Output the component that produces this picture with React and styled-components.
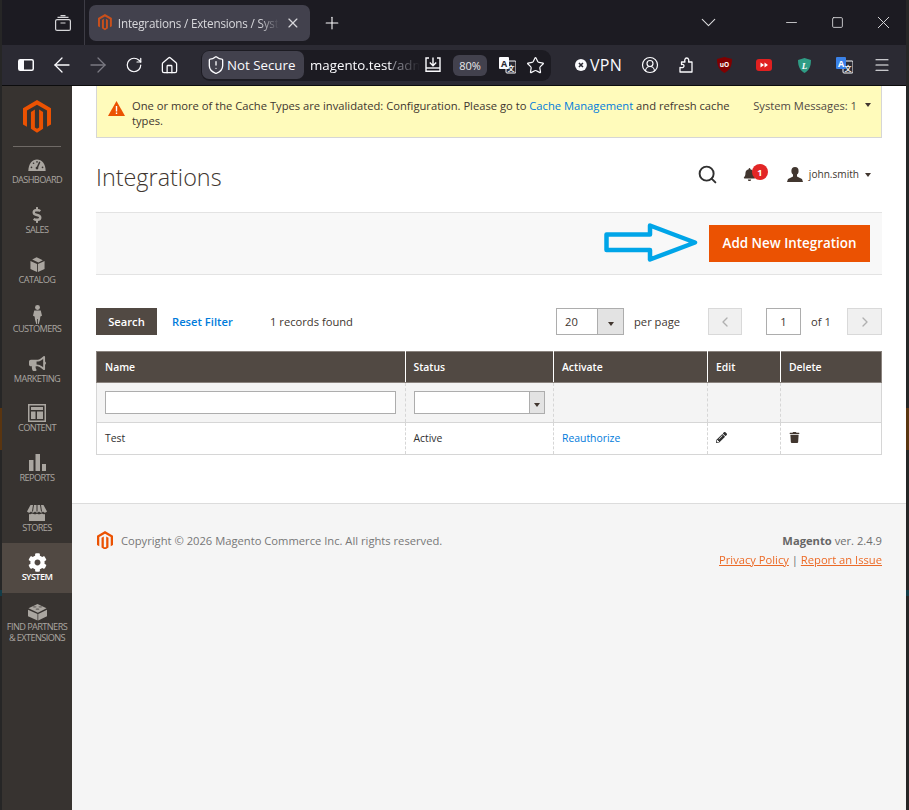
import React from "react";
import styled, { createGlobalStyle } from "styled-components";
import {
  ArrowLeft,
  ArrowRight,
  RotateCw,
  Home,
  ShieldAlert,
  Star,
  Menu,
  X,
  Plus,
  ChevronDown,
  ChevronLeft,
  ChevronRight,
  Minus,
  Square,
  CircleUserRound,
  Search,
} from "lucide-react";
import { FaBullhorn, FaCog, FaDollarSign, FaPencilAlt, FaTrash, FaBell } from "react-icons/fa";

const GlobalStyle = createGlobalStyle`
  html, body {
    margin: 0;
    padding: 0;
    width: 909px;
    height: 810px;
    overflow: hidden;
    background: #1c1b22;
  }
  * { box-sizing: border-box; }
`;

const Win = styled.div`
  width: 909px;
  height: 810px;
  padding: 0 3px 0 2px;
  display: flex;
  flex-direction: column;
  font-family: "Open Sans", sans-serif;
  overflow: hidden;
  background: linear-gradient(
    to bottom,
    #262626 0 408px,
    #5a3510 408px 450px,
    #262626 450px 590px,
    #123c48 590px 596px,
    #262626 596px
  );
`;

const TabStrip = styled.div`
  height: 45px;
  background: #1c1b22;
  display: flex;
  align-items: center;
  color: #fbfbfe;
  flex: none;
`;

const TabGroupBtn = styled.div`
  width: 83px;
  height: 45px;
  border-right: 1px solid #3d3c45;
  display: flex;
  align-items: center;
  justify-content: flex-end;
  padding-right: 13px;
  flex: none;
`;

const Tab = styled.div`
  margin-left: 4px;
  width: 221px;
  height: 36px;
  background: #42414d;
  border-radius: 7px;
  display: flex;
  align-items: center;
  padding: 0 9px;
  gap: 6px;
  flex: none;
`;

const TabTitle = styled.span`
  font-size: 11.7px;
  letter-spacing: -0.2px;
  width: 163px;
  white-space: nowrap;
  overflow: hidden;
  color: #d8d8dc;
  -webkit-mask-image: linear-gradient(to right, #000 88%, transparent 100%);
  mask-image: linear-gradient(to right, #000 88%, transparent 100%);
`;

const NewTab = styled.div`
  margin-left: 12px;
  width: 20px;
  display: flex;
  flex: none;
`;

const WinControls = styled.div`
  margin-left: auto;
  display: flex;
  align-items: center;
  color: #dcdcde;
  height: 45px;
`;

const WinBtn = styled.div`
  width: 46px;
  display: flex;
  justify-content: center;
  margin-left: ${(p) => p.$ml || 0}px;
`;

const NavBar = styled.div`
  height: 41px;
  background: #2b2a33;
  border-bottom: 1px solid #0c0c0d;
  display: flex;
  align-items: center;
  color: #fbfbfe;
  flex: none;
  padding-left: 6px;
`;

const NavIcon = styled.div`
  width: ${(p) => p.$w || 36}px;
  margin-left: ${(p) => p.$ml || 0}px;
  flex: none;
  display: flex;
  align-items: center;
  justify-content: center;
  color: ${(p) => (p.$dim ? "#7b7a83" : "#fbfbfe")};
`;

const UrlBar = styled.div`
  width: 350px;
  height: 31px;
  margin-left: 14px;
  background: #1c1b22;
  border-radius: 9px;
  display: flex;
  align-items: center;
  padding-left: 1px;
  flex: none;
`;

const SecurePill = styled.div`
  width: 102px;
  height: 28px;
  background: #42414d;
  border-radius: 7px;
  display: flex;
  align-items: center;
  padding-left: 4px;
  gap: 1px;
  font-size: 13.3px;
  color: #fbfbfe;
  flex: none;
`;

const UrlText = styled.div`
  margin-left: 6px;
  width: 110px;
  font-size: 13.3px;
  white-space: nowrap;
  overflow: hidden;
  color: #fbfbfe;
  -webkit-mask-image: linear-gradient(to right, #000 80%, transparent 100%);
  mask-image: linear-gradient(to right, #000 80%, transparent 100%);
  span { color: #8f8f98; }
`;

const ZoomPill = styled.div`
  margin-left: 12px;
  width: 34px;
  height: 21px;
  background: #42414d;
  border-radius: 6px;
  font-size: 11px;
  display: flex;
  align-items: center;
  justify-content: center;
  color: #e8e8ea;
  flex: none;
`;

const VpnBadge = styled.div`
  margin-left: 24px;
  width: 47px;
  display: flex;
  align-items: center;
  gap: 3px;
  font-size: 16px;
  letter-spacing: 0.3px;
  font-weight: 500;
  flex: none;
`;

const Page = styled.div`
  flex: 1;
  display: flex;
  min-height: 0;
`;

const Sidebar = styled.nav`
  width: 70px;
  background: #373330;
  flex: none;
  display: flex;
  flex-direction: column;
`;

const LogoBox = styled.div`
  height: 61px;
  margin: 0 11px;
  border-bottom: 1px solid #6f6a66;
  display: flex;
  justify-content: center;
  padding-top: 14px;
  flex: none;
`;

const MenuList = styled.div`
  display: flex;
  flex-direction: column;
  margin-top: -0.6px;
`;

const MenuItem = styled.div`
  height: 49.6px;
  background: ${(p) => (p.$active ? "#514943" : "transparent")};
  color: ${(p) => (p.$active ? "#ffffff" : "#aaa6a0")};
  display: flex;
  flex-direction: column;
  align-items: center;
  padding-top: 8px;
`;

const MenuIconSlot = styled.div`
  height: 22px;
  display: flex;
  align-items: center;
  justify-content: center;
  flex: none;
`;

const MenuLabel = styled.div`
  font-size: 9.2px;
  line-height: 11px;
  letter-spacing: -0.6px;
  text-align: center;
  margin-top: -2px;
  white-space: pre-line;
  font-weight: ${(p) => (p.$active ? 600 : 400)};
`;

const Main = styled.main`
  flex: 1;
  display: flex;
  flex-direction: column;
  background: #fff;
  min-width: 0;
`;

const Content = styled.div`
  padding: 0 24px;
  height: 417px;
  flex: none;
  display: flex;
  flex-direction: column;
`;

const Notice = styled.div`
  height: 52px;
  flex: none;
  background: #fffbbb;
  border: 1px solid #d6d6d6;
  border-top: 0;
  display: flex;
  padding: 12px 10px 0 11px;
  font-size: 11.2px;
  line-height: 15px;
  color: #41362f;
`;

const WarnIcon = styled.svg`
  flex: none;
  margin-top: 3px;
`;

const NoticeText = styled.div`
  margin-left: 7px;
  width: 600px;
  a { color: #007bdb; text-decoration: none; }
`;

const SysMessages = styled.div`
  margin-left: auto;
  display: flex;
  gap: 8px;
  white-space: nowrap;
  color: #514943;
`;

const Caret = styled.span`
  display: inline-block;
  width: 0;
  height: 0;
  border-left: 3px solid transparent;
  border-right: 3px solid transparent;
  border-top: 4px solid #41362f;
  margin-top: ${(p) => p.$top || 5}px;
`;

const PageHeader = styled.div`
  height: 74px;
  flex: none;
  display: flex;
  align-items: center;
  justify-content: space-between;
  padding-right: 11px;
`;

const Title = styled.h1`
  margin: 3px 0 0;
  font-size: 23.4px;
  font-weight: 300;
  color: #41362f;
`;

const HeaderTools = styled.div`
  display: flex;
  align-items: center;
  color: #303030;
  padding-bottom: 2px;
`;

const SearchIcon = styled(Search)`
  margin-right: -3px;
`;

const Bell = styled.div`
  position: relative;
  margin-left: 28px;
  width: 44px;
  height: 16px;
  display: flex;
  align-items: center;
  color: #41362f;
`;

const Badge = styled.span`
  position: absolute;
  left: 9px;
  top: -2px;
  width: 16px;
  height: 16px;
  border-radius: 50%;
  background: #e22626;
  color: #fff;
  font-size: 9px;
  font-weight: 700;
  display: flex;
  align-items: center;
  justify-content: center;
`;

const UserName = styled.span`
  font-size: 10.1px;
  margin: 0 6px;
  color: #41362f;
`;

const ActionBar = styled.div`
  height: 63px;
  flex: none;
  position: relative;
  background: #f8f8f8;
  border-top: 1px solid #e3e3e3;
  border-bottom: 1px solid #e3e3e3;
  display: flex;
  align-items: center;
  justify-content: flex-end;
  padding-right: 12px;
`;

const PrimaryBtn = styled.div`
  width: 161px;
  height: 37px;
  padding-bottom: 2px;
  background: #eb5202;
  color: #fff;
  font-size: 13.4px;
  font-weight: 600;
  display: flex;
  align-items: center;
  justify-content: center;
`;

const Arrow = styled.svg`
  position: absolute;
  left: 508px;
  top: 9px;
`;

const GridBar = styled.div`
  margin-top: 33px;
  height: 27px;
  flex: none;
  display: flex;
  align-items: center;
  font-size: 11.2px;
  color: #41362f;
`;

const SearchBtn = styled.div`
  width: 61px;
  height: 27px;
  background: #514943;
  color: #fff;
  font-weight: 600;
  display: flex;
  align-items: center;
  justify-content: center;
`;

const ResetLink = styled.a`
  margin-left: 15px;
  font-weight: 600;
  color: #007bdb;
  width: 98px;
`;

const Pager = styled.div`
  margin-left: auto;
  display: flex;
  align-items: center;
`;

const PerPage = styled.div`
  width: 68px;
  height: 27px;
  border: 1px solid #adadad;
  display: flex;
  align-items: stretch;
`;

const PerValue = styled.div`
  flex: 1;
  padding-left: 8px;
  display: flex;
  align-items: center;
  font-size: 11.2px;
`;

const PerArrow = styled.div`
  width: 26px;
  background: #e3e3e3;
  border-left: 1px solid #adadad;
  display: flex;
  align-items: center;
  justify-content: center;
`;

const PageBtn = styled.div`
  width: ${(p) => p.$w}px;
  height: 27px;
  background: #f0f0f0;
  border: 1px solid #d9d9d9;
  color: #b0b0b0;
  display: flex;
  align-items: center;
  justify-content: center;
`;

const PageInput = styled.div`
  margin-left: 24px;
  width: 35px;
  height: 27px;
  border: 1px solid #adadad;
  display: flex;
  align-items: center;
  justify-content: center;
`;

const PagerText = styled.span`
  margin-left: 10px;
  width: ${(p) => p.$w}px;
`;

const GridTable = styled.table`
  margin-top: 16px;
  width: 785px;
  height: 103px;
  flex: none;
  border-collapse: collapse;
  table-layout: fixed;
  font-size: 10.4px;
  color: #303030;
`;

const Th = styled.th`
  height: 31px;
  background: #514943;
  color: #fff;
  font-size: 10.4px;
  font-weight: 600;
  text-align: left;
  padding: 0 8px;
  border: 1px solid #8a837e;
  border-left: 1px solid #fff;
  border-right: 1px solid #fff;
  &:first-child { border-left: 1px solid #8a837e; }
  &:last-child { border-right: 1px solid #8a837e; }
`;

const FilterCell = styled.td`
  height: 40px;
  background: #f4f4f4;
  padding: 0 8px;
  border-bottom: 1px solid #d6d6d6;
  border-left: 1px dashed #d6d6d6;
  &:first-child { border-left: 1px solid #d6d6d6; padding-right: 9px; }
  &:last-child { border-right: 1px solid #d6d6d6; }
`;

const DataCell = styled.td`
  height: 32px;
  padding: 0 8px 2px;
  background: #fff;
  border-bottom: 1px solid #d6d6d6;
  border-left: 1px dashed #d6d6d6;
  &:first-child { border-left: 1px solid #d6d6d6; }
  &:last-child { border-right: 1px solid #d6d6d6; }
  a { color: #007bdb; }
  svg { display: block; }
`;

const TextBox = styled.div`
  height: 23px;
  background: #fff;
  border: 1px solid #adadad;
`;

const SelectBox = styled.div`
  height: 23px;
  background: #fff;
  border: 1px solid #adadad;
  display: flex;
  justify-content: flex-end;
`;

const SelectArrow = styled.div`
  width: 15px;
  background: #e3e3e3;
  border-left: 1px solid #adadad;
  display: flex;
  align-items: center;
  justify-content: center;
`;

const Footer = styled.footer`
  flex: 1;
  background: #f5f5f5;
  border-top: 1px solid #dcdcdc;
  padding: 27px 24px 0 25px;
  display: flex;
  justify-content: space-between;
  font-size: 11.2px;
  color: #6f6f6f;
`;

const Copyright = styled.div`
  display: flex;
  align-items: center;
  gap: 8px;
  height: 18px;
  color: #777;
`;

const FooterRight = styled.div`
  text-align: right;
  line-height: 19px;
  a { color: #eb5202; text-decoration: underline; opacity: 0.85; }
  b { font-weight: 700; color: #666; }
`;

const MagentoLogo = ({ size = 28, color = "#eb5202" }) => (
  <svg width={size} height={(size * 28) / 24} viewBox="0 0 24 28" fill={color}>
    <path d="M12 0 L24 7 V21 L20.6 23 V9 L12 4 L3.4 9 V23 L0 21 V7 Z" />
    <path d="M13.8 8.2 V23.6 L12 24.7 L10.2 23.6 V8.2 L6.8 10.2 V24.7 L12 28 L17.2 24.7 V10.2 Z" />
  </svg>
);

const IconDashboard = () => (
  <svg width="18" height="12" viewBox="0 0 26 17" fill="currentColor">
    <path d="M0.5 17 C0.5 7 6 0.5 13 0.5 C20 0.5 25.5 7 25.5 17 Z" />
    <path d="M17 4 L13 13" stroke="#373330" strokeWidth="2" />
    <circle cx="13" cy="13" r="2" fill="#373330" />
    <circle cx="5" cy="12" r="1.2" fill="#373330" />
    <circle cx="8" cy="6" r="1.2" fill="#373330" />
    <circle cx="13" cy="4" r="1.2" fill="#373330" />
    <circle cx="21" cy="12" r="1.2" fill="#373330" />
  </svg>
);

const IconBox = () => (
  <svg width="15" height="15" viewBox="0 0 16 17" fill="currentColor">
    <path d="M0 4.5 L7.5 8 V17 L0 13.5 Z" />
    <path d="M8.5 8 L16 4.5 V13.5 L8.5 17 Z" />
    <path d="M2 2.8 L7 0.3 L14 3.6 L9 6.2 Z" />
  </svg>
);

const IconCustomer = () => (
  <svg width="9" height="23" viewBox="0 0 11 23" fill="currentColor">
    <circle cx="5.5" cy="3" r="3" />
    <path d="M1.5 6.5 H9.5 L11 13 L9 14 L8.5 18 L7 23 H6 V17 H5 V23 H4 L2.5 18 L2 14 L0 13 Z" />
  </svg>
);

const IconContent = () => (
  <svg width="18" height="18" viewBox="0 0 18 18" fill="currentColor">
    <path d="M0 0 H18 V18 H0 Z M1.5 1.5 V16.5 H16.5 V1.5 Z" fillRule="evenodd" />
    <rect x="3" y="3" width="12" height="3" />
    <rect x="3" y="7.5" width="4.5" height="7.5" />
    <rect x="9" y="7.5" width="6" height="7.5" />
  </svg>
);

const IconReports = () => (
  <svg width="17" height="17" viewBox="0 0 17 17" fill="currentColor">
    <rect x="0" y="6" width="4.5" height="11" />
    <rect x="6.5" y="0" width="4.5" height="17" />
    <rect x="13" y="10" width="4" height="7" />
  </svg>
);

const IconStores = () => (
  <svg width="20" height="16" viewBox="0 0 20 16" fill="currentColor">
    <path d="M3.5 0 H16.5 L20 6.5 C19 8 16.8 8 16 6.6 C15 8 13 8 12 6.6 C11 8 9 8 8 6.6 C7 8 5 8 4 6.6 C3.2 8 1 8 0 6.5 Z" />
    <path d="M2 9 C3 9.4 4.2 9.2 5 8.6 C6.8 9.6 8.2 9.6 10 8.7 C11.8 9.6 13.2 9.6 15 8.6 C15.8 9.2 17 9.4 18 9 V16 H2 Z" />
    <path d="M6.5 0 L5.5 6.5 M10 0 V6.5 M13.5 0 L14.5 6.5" stroke="#373330" strokeWidth="1" />
  </svg>
);

const IconLego = () => (
  <svg width="19" height="18" viewBox="0 0 20 18" fill="currentColor">
    <path d="M0 6.5 L10 11 V18 L0 13.5 Z" />
    <path d="M10.8 11 L20 6.5 V13.5 L10.8 18 Z" />
    <path d="M10 0.5 L19.5 5 L10.4 9.8 L0.5 5 Z" />
    <ellipse cx="7" cy="3.6" rx="2" ry="1" fill="#373330" opacity="0.45" />
    <ellipse cx="13" cy="3.6" rx="2" ry="1" fill="#373330" opacity="0.45" />
    <ellipse cx="10" cy="6" rx="2" ry="1" fill="#373330" opacity="0.45" />
  </svg>
);

const IconSidebarPanel = () => (
  <svg width="16" height="12" viewBox="0 0 16 12">
    <rect x="0.75" y="0.75" width="14.5" height="10.5" rx="1.5" fill="none" stroke="#fbfbfe" strokeWidth="1.5" />
    <rect x="1" y="1" width="5" height="10" fill="#fbfbfe" />
  </svg>
);

const IconTabGroup = () => (
  <svg width="16" height="16" viewBox="0 0 16 16" fill="none" stroke="#d5d5d8" strokeWidth="1.2">
    <rect x="0.6" y="4.6" width="14.8" height="10.8" rx="1.5" />
    <path d="M2.5 2.4 H13.5 M5.5 0.6 H10.5 M5.5 8 H10.5" />
  </svg>
);

const IconDownload = () => (
  <svg width="16" height="16" viewBox="0 0 16 16" fill="none" stroke="#fbfbfe" strokeWidth="1.4">
    <path d="M4 1 H1 V14.3 H15 V1 H12" />
    <path d="M8 0.5 V8.5 M4.8 5.6 L8 8.8 L11.2 5.6" />
    <path d="M1 11 H15" />
  </svg>
);

const IconTranslate = ({ back = "#fbfbfe", fg = "#2b2a33" }) => (
  <svg width="17" height="17" viewBox="0 0 17 17">
    <rect x="7" y="4" width="10" height="12" rx="1" fill="#2b2a33" stroke="#fbfbfe" strokeWidth="1" />
    <rect x="0" y="0" width="10" height="12" rx="1" fill={back} />
    <text x="5" y="9.5" fontSize="9" fontWeight="700" textAnchor="middle" fontFamily="Open Sans, sans-serif" fill={fg}>A</text>
    <text x="12" y="13.5" fontSize="7" fontWeight="700" textAnchor="middle" fontFamily="Noto Sans CJK SC, sans-serif" fill="#fbfbfe">文</text>
  </svg>
);

const IconPuzzle = () => (
  <svg width="14" height="16" viewBox="0 0 14 16" fill="none" stroke="#fbfbfe" strokeWidth="1.3" strokeLinejoin="round">
    <path d="M5 15 H13 V5 H9.5 C10 4 10 1 7.7 1 C5.5 1 5.5 4 6 5 H2.5 V7.5 C4.5 7 5 8 5 9 C5 10 4.2 11 1 10.4 V15 Z" />
  </svg>
);

const IconUblock = () => (
  <svg width="15" height="16" viewBox="0 0 15 16">
    <path d="M7.5 0 L15 2 C15 9 13 13 7.5 16 C2 13 0 9 0 2 Z" fill="#800000" />
    <text x="7.5" y="9.5" fontSize="6.5" fontWeight="700" textAnchor="middle" fontFamily="Open Sans, sans-serif" fill="#fff">uO</text>
  </svg>
);

const IconRedPlay = () => (
  <svg width="16" height="12" viewBox="0 0 16 12">
    <rect width="16" height="12" rx="3" fill="#e02020" />
    <path d="M4.5 3.5 L8 6 L4.5 8.5 Z M8.5 3.5 L12 6 L8.5 8.5 Z" fill="#fff" />
  </svg>
);

const IconGreenShield = () => (
  <svg width="13" height="15" viewBox="0 0 13 15">
    <path d="M6.5 0 L13 2 C13 8.5 11 12.5 6.5 15 C2 12.5 0 8.5 0 2 Z" fill="#2f9c85" />
    <text x="6.5" y="10.5" fontSize="9" fontStyle="italic" fontWeight="700" textAnchor="middle" fontFamily="Liberation Serif, serif" fill="#fff">L</text>
  </svg>
);

const VpnDot = () => (
  <svg width="12" height="12" viewBox="0 0 12 12">
    <circle cx="6" cy="6" r="6" fill="#fbfbfe" />
    <path d="M4 4 L8 8 M8 4 L4 8" stroke="#2b2a33" strokeWidth="1.6" />
  </svg>
);

const NoticeWarning = () => (
  <WarnIcon width="17" height="15" viewBox="0 0 17 15">
    <path d="M8.5 0 L17 15 H0 Z" fill="#eb5202" />
    <rect x="7.8" y="5" width="1.4" height="5.5" fill="#fff" />
    <rect x="7.8" y="11.5" width="1.4" height="1.5" fill="#fff" />
  </WarnIcon>
);

const IconBust = () => (
  <svg width="16" height="15" viewBox="0 0 16 15" fill="#41362f">
    <ellipse cx="8" cy="4" rx="3.6" ry="4" />
    <path d="M6 7 H10 V9.5 L15 12 L16 15 H0 L1 12 L6 9.5 Z" />
  </svg>
);

const MENU = [
  { label: "DASHBOARD", icon: <IconDashboard /> },
  { label: "SALES", icon: <FaDollarSign size={16} /> },
  { label: "CATALOG", icon: <IconBox /> },
  { label: "CUSTOMERS", icon: <IconCustomer /> },
  { label: "MARKETING", icon: <FaBullhorn size={17} /> },
  { label: "CONTENT", icon: <IconContent /> },
  { label: "REPORTS", icon: <IconReports /> },
  { label: "STORES", icon: <IconStores /> },
  { label: "SYSTEM", icon: <FaCog size={19} />, active: true },
  { label: "FIND PARTNERS\n& EXTENSIONS", icon: <IconLego /> },
];

const COLUMNS = [
  { name: "Name", width: 308.5 },
  { name: "Status", width: 148.5 },
  { name: "Activate", width: 154 },
  { name: "Edit", width: 73 },
  { name: "Delete", width: 101 },
];

export default function App() {
  return (
    <Win>
      <GlobalStyle />
      <TabStrip>
        <TabGroupBtn>
          <IconTabGroup />
        </TabGroupBtn>
        <Tab>
          <MagentoLogo size={14} color="#c9501c" />
          <TabTitle>Integrations / Extensions / Syst</TabTitle>
          <X size={16} color="#d8d8dc" strokeWidth={1.8} />
        </Tab>
        <NewTab>
          <Plus size={20} strokeWidth={1.3} />
        </NewTab>
        <WinControls>
          <WinBtn>
            <ChevronDown size={25} strokeWidth={1} />
          </WinBtn>
          <WinBtn $ml={37}>
            <Minus size={17} strokeWidth={1.2} />
          </WinBtn>
          <WinBtn>
            <Square size={13} strokeWidth={1.6} />
          </WinBtn>
          <WinBtn>
            <X size={21} strokeWidth={1.1} />
          </WinBtn>
        </WinControls>
      </TabStrip>
      <NavBar>
        <NavIcon>
          <IconSidebarPanel />
        </NavIcon>
        <NavIcon>
          <ArrowLeft size={24} strokeWidth={1.3} />
        </NavIcon>
        <NavIcon $dim>
          <ArrowRight size={24} strokeWidth={1.3} />
        </NavIcon>
        <NavIcon>
          <RotateCw size={18} strokeWidth={1.6} />
        </NavIcon>
        <NavIcon $w={35}>
          <Home size={19} strokeWidth={1.6} />
        </NavIcon>
        <UrlBar>
          <SecurePill>
            <ShieldAlert size={20} strokeWidth={1.6} />
            Not Secure
          </SecurePill>
          <UrlText>
            magento.test<span>/adm</span>
          </UrlText>
          <NavIcon $w={16} $ml={5}>
            <IconDownload />
          </NavIcon>
          <ZoomPill>80%</ZoomPill>
          <NavIcon $w={17} $ml={12}>
            <IconTranslate />
          </NavIcon>
          <NavIcon $w={20} $ml={9}>
            <Star size={19} strokeWidth={1.5} />
          </NavIcon>
        </UrlBar>
        <VpnBadge>
          <VpnDot />
          VPN
        </VpnBadge>
        <NavIcon $w={20} $ml={18}>
          <CircleUserRound size={18} strokeWidth={1.6} />
        </NavIcon>
        <NavIcon $w={20} $ml={16}>
          <IconPuzzle />
        </NavIcon>
        <NavIcon $w={20} $ml={18}>
          <IconUblock />
        </NavIcon>
        <NavIcon $w={20} $ml={20}>
          <IconRedPlay />
        </NavIcon>
        <NavIcon $w={20} $ml={20}>
          <IconGreenShield />
        </NavIcon>
        <NavIcon $w={20} $ml={20}>
          <IconTranslate back="#3b82e8" fg="#fff" />
        </NavIcon>
        <NavIcon $w={20} $ml={18}>
          <Menu size={18} strokeWidth={1.6} />
        </NavIcon>
      </NavBar>
      <Page>
        <Sidebar>
          <LogoBox>
            <MagentoLogo size={28} />
          </LogoBox>
          <MenuList>
            {MENU.map((item) => (
              <MenuItem key={item.label} $active={item.active}>
                <MenuIconSlot>{item.icon}</MenuIconSlot>
                <MenuLabel $active={item.active}>{item.label}</MenuLabel>
              </MenuItem>
            ))}
          </MenuList>
        </Sidebar>
        <Main>
          <Content>
            <Notice>
              <NoticeWarning />
              <NoticeText>
                One or more of the Cache Types are invalidated: Configuration. Please go to{" "}
                <a>Cache Management</a> and refresh cache types.
              </NoticeText>
              <SysMessages>
                System Messages: 1 <Caret />
              </SysMessages>
            </Notice>
            <PageHeader>
              <Title>Integrations</Title>
              <HeaderTools>
                <SearchIcon size={21} strokeWidth={2.2} />
                <Bell>
                  <FaBell size={13} />
                  <Badge>1</Badge>
                </Bell>
                <IconBust />
                <UserName>john.smith</UserName>
                <Caret $top={1} />
              </HeaderTools>
            </PageHeader>
            <ActionBar>
              <Arrow width="98" height="42" viewBox="0 0 98 42">
                <path
                  d="M2.5 12.5 H46 V3.5 L91 20.5 L46 37.5 V28 H2.5 Z"
                  fill="none"
                  stroke="#00a5e8"
                  strokeWidth="4.5"
                  strokeLinejoin="round"
                />
              </Arrow>
              <PrimaryBtn>Add New Integration</PrimaryBtn>
            </ActionBar>
            <GridBar>
              <SearchBtn>Search</SearchBtn>
              <ResetLink>Reset Filter</ResetLink>
              <span>1 records found</span>
              <Pager>
                <PerPage>
                  <PerValue>20</PerValue>
                  <PerArrow>
                    <Caret $top={0} />
                  </PerArrow>
                </PerPage>
                <PagerText $w={74}>per page</PagerText>
                <PageBtn $w={34}>
                  <ChevronLeft size={16} />
                </PageBtn>
                <PageInput>1</PageInput>
                <PagerText $w={36}>of 1</PagerText>
                <PageBtn $w={35}>
                  <ChevronRight size={16} />
                </PageBtn>
              </Pager>
            </GridBar>
            <GridTable>
              <colgroup>
                {COLUMNS.map((c) => (
                  <col key={c.name} style={{ width: c.width }} />
                ))}
              </colgroup>
              <thead>
                <tr>
                  {COLUMNS.map((c) => (
                    <Th key={c.name}>{c.name}</Th>
                  ))}
                </tr>
              </thead>
              <tbody>
                <tr>
                  <FilterCell>
                    <TextBox />
                  </FilterCell>
                  <FilterCell>
                    <SelectBox>
                      <SelectArrow>
                        <Caret $top={0} />
                      </SelectArrow>
                    </SelectBox>
                  </FilterCell>
                  <FilterCell />
                  <FilterCell />
                  <FilterCell />
                </tr>
                <tr>
                  <DataCell>Test</DataCell>
                  <DataCell>Active</DataCell>
                  <DataCell>
                    <a>Reauthorize</a>
                  </DataCell>
                  <DataCell>
                    <FaPencilAlt size={11} color="#303030" />
                  </DataCell>
                  <DataCell>
                    <FaTrash size={11} color="#41362f" />
                  </DataCell>
                </tr>
              </tbody>
            </GridTable>
          </Content>
          <Footer>
            <Copyright>
              <MagentoLogo size={16} />
              Copyright © 2026 Magento Commerce Inc. All rights reserved.
            </Copyright>
            <FooterRight>
              <div>
                <b>Magento</b> ver. 2.4.9
              </div>
              <div>
                <a>Privacy Policy</a> | <a>Report an Issue</a>
              </div>
            </FooterRight>
          </Footer>
        </Main>
      </Page>
    </Win>
  );
}
